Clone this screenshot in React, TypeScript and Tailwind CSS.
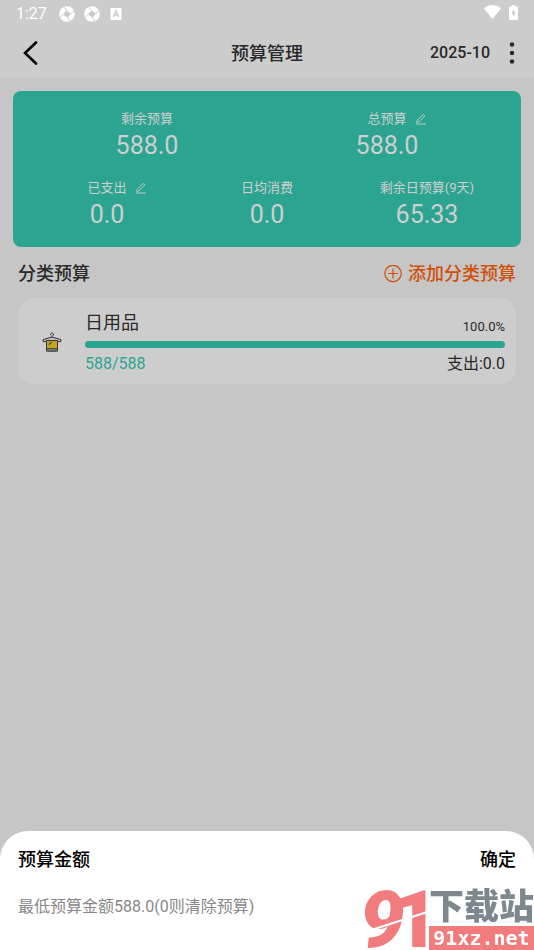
import { useState } from "react";

function PencilIcon() {
  return (
    <svg className="size-3" viewBox="0 0 12 12" fill="none" stroke="currentColor" strokeWidth="0.9" aria-hidden="true">
      <path d="M2.2 7.4 8.2 1.4l1.6 1.6-6 6-2.1.5z" />
      <path d="M1 11h10" />
    </svg>
  );
}

function ApertureIcon() {
  return (
    <svg className="size-4" viewBox="0 0 16 16" aria-hidden="true">
      <circle cx="8" cy="8" r="7.8" fill="#fff" />
      <path d="M7.6 4.4 12 7.6 8.6 11.8 4 8.4z" fill="#ccc" />
      <path d="M7.8 4.6 5.2 1.2M11.8 7.8l3.4-3.2M8.4 11.4l2.6 3.6M4.2 8.2 1 11.6" stroke="#ccc" strokeWidth="1" />
    </svg>
  );
}

function StatusBar() {
  return (
    <div className="flex h-7 items-center justify-between pr-4 pl-4 text-white">
      <div className="flex items-center">
        <span className="w-[43px] text-base leading-5">1:27</span>
        <span className="flex items-center gap-[9px]">
          <ApertureIcon />
          <ApertureIcon />
        </span>
        <svg className="ml-2.5 size-3" viewBox="0 0 12 12" aria-hidden="true">
          <rect x="0.5" width="11" height="12" rx="1.2" fill="#fff" />
          <path d="M3.3 9 6 2.8 8.7 9M4.3 7h3.4" fill="none" stroke="#ccc" strokeWidth="1.4" />
        </svg>
      </div>
      <div className="flex items-center gap-2 pb-1">
        <svg className="h-[14px] w-[17px]" viewBox="0 0 17 14" fill="#fff" aria-hidden="true">
          <path d="M0 3.4C5-1 12-1 17 3.4L8.5 14z" />
        </svg>
        <svg className="h-[15px] w-[9px]" viewBox="0 0 9 15" aria-hidden="true">
          <path d="M1 1.4h1.8V0h3.4v1.4H8a1 1 0 0 1 1 1V15H0V2.4a1 1 0 0 1 1-1z" fill="#fff" />
          <path d="M5.4 4 2.6 8.5h1.7L3.7 12l2.8-4.5H4.8z" fill="#bbb" />
        </svg>
      </div>
    </div>
  );
}

function Header() {
  return (
    <header className="grid h-[50px] grid-cols-[1fr_auto_1fr] items-center px-3 text-[#292929]">
      <button type="button" aria-label="返回" className="ml-1 flex size-7 items-center justify-center text-black">
        <svg className="h-6 w-4" viewBox="0 0 16 24" fill="none" stroke="currentColor" strokeWidth="2.6" strokeLinecap="round" aria-hidden="true">
          <path d="M14 1.5 3 12l11 10.5" />
        </svg>
      </button>
      <h1 className="pt-0.5 text-lg leading-6 font-medium">预算管理</h1>
      <div className="flex items-center justify-end gap-3">
        <button type="button" className="text-base leading-6 font-medium">2025-10</button>
        <button type="button" aria-label="更多" className="flex w-5 justify-center">
          <svg className="h-6 w-5" viewBox="0 0 20 24" fill="currentColor" aria-hidden="true">
            <circle cx="10" cy="3.5" r="2.2" />
            <circle cx="10" cy="12" r="2.2" />
            <circle cx="10" cy="20.5" r="2.2" />
          </svg>
        </button>
      </div>
    </header>
  );
}

function Stat({ label, value, editable = false }: { label: string; value: string; editable?: boolean }) {
  return (
    <div>
      <div className="grid grid-cols-[1fr_auto_1fr] items-center text-[13px] leading-5">
        <span />
        <span>{label}</span>
        {editable ? (
          <button type="button" aria-label={"编辑" + label} className="ml-2 justify-self-start">
            <PencilIcon />
          </button>
        ) : (
          <span />
        )}
      </div>
      <div className="text-center text-[25px] leading-[34px]">{value}</div>
    </div>
  );
}

function CategoryCard() {
  return (
    <article className="mx-[18px] flex h-[86px] items-center rounded-2xl bg-[#cdcdcd] pt-0.5 pr-[11px] text-[#292929]">
      <div className="flex w-[67px] justify-center">
        <svg className="size-5" viewBox="0 0 20 20" fill="none" stroke="#3a3a3a" strokeWidth="1" strokeLinejoin="round" aria-hidden="true">
          <path d="M8.6 3.2c-.4-3 3.6-2.8 2.8 0L10 4v1.5" />
          <path d="M10 5 1 7.6v2h3.5V8.6h11v1h3.5v-2z" fill="#bbb" />
          <path d="M4.5 8.6h11v10.4h-11z" fill="#c9a41d" />
          <path d="M4.5 16.7h11v2.3h-11z" fill="#888" />
          <path d="m7.3 12 2.2-1.8M6.8 13.2l.8-.8" strokeWidth="1.1" />
        </svg>
      </div>
      <div className="flex-1">
        <div className="flex items-end justify-between">
          <h3 className="text-lg leading-7">日用品</h3>
          <span className="text-[13px] leading-5">100.0%</span>
        </div>
        <div role="progressbar" aria-label="日用品预算" aria-valuenow={100} className="mt-1 h-[7px] rounded-full bg-[#2ca492]" />
        <div className="mt-1 flex justify-between text-base leading-6">
          <span className="text-[#2ca492]">588/588</span>
          <span>支出:0.0</span>
        </div>
      </div>
    </article>
  );
}

function SiteMark() {
  return (
    <div className="pointer-events-none absolute right-0 bottom-0 flex items-end gap-[2px]">
      <div className="relative flex h-[60px] items-center text-[80px] leading-[60px] font-black text-[#f27b7d]">
        <span className="italic">9</span>
        <span className="-mr-3 -ml-3">1</span>
        <svg className="absolute inset-0 size-full" viewBox="0 0 68 60" preserveAspectRatio="none" aria-hidden="true">
          <path d="M2 43 68 22" stroke="#fff" strokeWidth="2" />
        </svg>
      </div>
      <div className="w-[105px]">
        <div className="text-[35px] leading-9 font-black whitespace-nowrap text-[#7d878e]">下载站</div>
        <div className="bg-[#f27b7d] text-center font-['DejaVu_Sans_Mono',monospace] text-xl leading-6 font-bold text-white">
          91xz.net
        </div>
      </div>
    </div>
  );
}

function BudgetSheet() {
  const [amount, setAmount] = useState("");
  return (
    <section role="dialog" aria-labelledby="sheet-title" className="fixed inset-x-0 bottom-0 rounded-t-[28px] bg-white px-[18px] pt-[17px] pb-[31px] text-black">
      <div className="flex items-center justify-between text-lg leading-6 font-medium">
        <h2 id="sheet-title">预算金额</h2>
        <button type="button">确定</button>
      </div>
      <input
        aria-labelledby="sheet-title"
        inputMode="decimal"
        value={amount}
        onChange={(event) => setAmount(event.target.value)}
        placeholder="最低预算金额588.0(0则清除预算)"
        className="mt-[23px] block h-6 w-full text-base leading-6 outline-none placeholder:text-[#888888]"
      />
      <SiteMark />
    </section>
  );
}

export default function App() {
  return (
    <div className="min-h-screen bg-[#c6c6c6] font-[Roboto,'Noto_Sans_CJK_SC',sans-serif]">
      <div className="bg-[#cccccc]">
        <StatusBar />
        <Header />
      </div>
      <main>
        <section className="mx-[13px] mt-[13px] rounded-lg bg-[#2ca492] px-[14px] pt-[18px] pb-[15px] text-[#cfcfcf]">
          <div className="grid grid-cols-2">
            <Stat label="剩余预算" value="588.0" />
            <Stat label="总预算" value="588.0" editable />
          </div>
          <div className="mt-[15px] grid grid-cols-3">
            <Stat label="已支出" value="0.0" editable />
            <Stat label="日均消费" value="0.0" />
            <Stat label="剩余日预算(9天)" value="65.33" />
          </div>
        </section>
        <div className="mx-[18px] flex h-[51px] items-center justify-between pt-0.5 text-lg leading-6 font-medium">
          <h2 className="text-[#292929]">分类预算</h2>
          <button type="button" className="flex items-center gap-1.5 text-[#d05008]">
            <svg className="size-[18px]" viewBox="0 0 18 18" fill="none" stroke="currentColor" strokeWidth="1.2" aria-hidden="true">
              <circle cx="9" cy="8.5" r="8.2" />
              <path d="M9 3.5v10M4 8.5h10" />
            </svg>
            添加分类预算
          </button>
        </div>
        <CategoryCard />
      </main>
      <BudgetSheet />
    </div>
  );
}
